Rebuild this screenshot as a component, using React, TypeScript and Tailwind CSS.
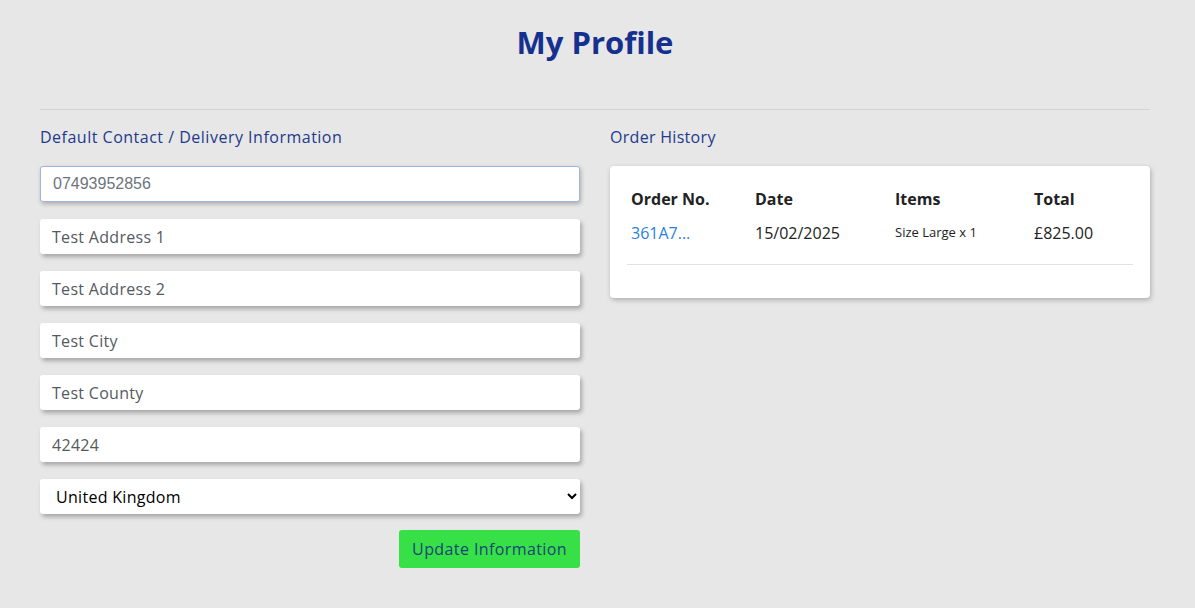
import { useState } from 'react';

interface Order {
  id: string;
  date: string;
  items: string;
  total: string;
}

const orders: Order[] = [
  { id: '361A7...', date: '15/02/2025', items: 'Size Large x 1', total: '£825.00' },
];

const fields = ['Test Address 1', 'Test Address 2', 'Test City', 'Test County', '42424'];

export default function App() {
  const [country, setCountry] = useState('United Kingdom');

  return (
    <main
      className="min-h-screen bg-[#e7e7e7] pb-10"
      style={{ fontFamily: '"Open Sans", "Liberation Sans", sans-serif' }}
    >
      <div className="ml-[40px] w-[1110px]">
        <h1 className="pt-[20px] pb-[45px] text-center text-[31px] font-bold leading-[44px] text-[#15308f]">
          My Profile
        </h1>
        <hr className="border-t border-[#d3d3d3]" />

        <div className="mt-[15px] grid grid-cols-2 gap-[30px]">
          <section>
            <h2 className="mb-[17px] text-[16px] leading-[24px] tracking-[0.5px] text-[#1d3a8c]">
              Default Contact / Delivery Information
            </h2>
            <form className="flex flex-col gap-[17px]" onSubmit={(e) => e.preventDefault()}>
              <input
                placeholder="07493952856"
                className="h-[36px] w-full rounded-[3px] border border-[#9db6e0] bg-white px-[12px] text-[16px] text-[#495057] shadow-[1px_2px_4px_rgba(0,0,0,0.25)] outline-none placeholder:text-[#6c757d]"
                style={{ fontFamily: '"Liberation Sans", Arial, sans-serif' }}
              />
              {fields.map((f) => (
                <input
                  key={f}
                  defaultValue={f}
                  className="h-[35px] w-full rounded-[3px] bg-white px-[12px] text-[16px] tracking-[0.3px] text-[#555a60] shadow-[2px_3px_4px_rgba(0,0,0,0.28)] outline-none"
                />
              ))}
              <select
                value={country}
                onChange={(e) => setCountry(e.target.value)}
                className="h-[35px] w-full rounded-[3px] bg-white px-[12px] text-[16px] tracking-[0.3px] text-black shadow-[2px_3px_4px_rgba(0,0,0,0.28)] outline-none"
              >
                <option>United Kingdom</option>
                <option>Ireland</option>
                <option>United States</option>
              </select>
              <div className="-mt-[1px] flex justify-end">
                <button
                  type="submit"
                  className="h-[38px] rounded-[3px] bg-[#36e046] px-[13px] text-[16px] tracking-[0.4px] text-[#1a4577]"
                >
                  Update Information
                </button>
              </div>
            </form>
          </section>

          <section>
            <h2 className="mb-[17px] text-[16px] leading-[24px] tracking-[0.3px] text-[#1d3a8c]">Order History</h2>
            <div className="rounded-[4px] bg-white px-[17px] pt-[19px] pb-[33px] shadow-[1px_2px_5px_rgba(0,0,0,0.25)]">
              <table className="w-full table-fixed border-collapse text-left text-[#222]">
                <thead>
                  <tr className="text-[16px] font-bold">
                    <th className="w-[128px] pl-[4px] pb-[8px] pt-[2px]">Order No.</th>
                    <th className="w-[140px] pb-[8px] pt-[2px]">Date</th>
                    <th className="w-[139px] pb-[8px] pt-[2px]">Items</th>
                    <th className="pb-[8px] pt-[2px]">Total</th>
                  </tr>
                </thead>
                <tbody>
                  {orders.map((o) => (
                    <tr key={o.id} className="border-b border-[#e2e2e2]">
                      <td className="pl-[4px] pt-[2px] pb-[19px] text-[16px] text-[#2a7fe0]">
                        <a href="#">{o.id}</a>
                      </td>
                      <td className="pt-[2px] pb-[19px] text-[16px]">{o.date}</td>
                      <td className="pt-[2px] pb-[19px] text-[13px]">{o.items}</td>
                      <td className="pt-[2px] pb-[19px] text-[16px]">{o.total}</td>
                    </tr>
                  ))}
                </tbody>
              </table>
            </div>
          </section>
        </div>
      </div>
    </main>
  );
}
